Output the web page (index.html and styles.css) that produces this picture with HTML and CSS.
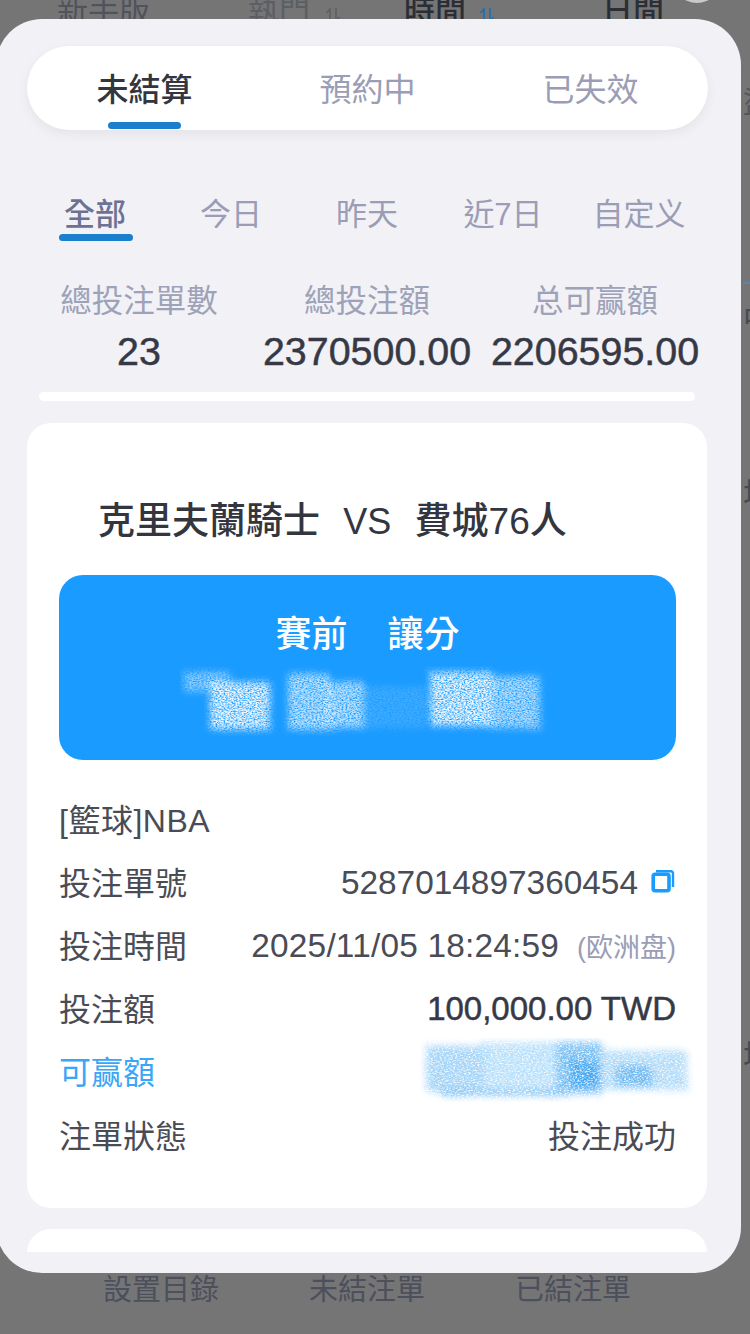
FILE: index.html
```html
<!DOCTYPE html>
<html lang="zh-Hant">
<head>
  <meta charset="UTF-8">
  <meta name="viewport" content="width=device-width, initial-scale=1.0">
  <title>未結算注單</title>
  <link rel="stylesheet" href="styles.css">
</head>
<body>
  <div class="page">
    <!-- page behind the sheet -->
    <div class="bg-top">
      <span class="bg-tab bg-new">新手版</span>
      <span class="bg-tab bg-hot">執門
        <svg class="sort-icon" width="16" height="16" viewBox="0 0 16 16" fill="none" stroke="currentColor" stroke-width="1.5">
          <path d="M5 15V2L1.5 6M11 1v13l3.500-4"/>
        </svg>
      </span>
      <span class="bg-tab bg-time">時間
        <svg class="sort-icon" width="16" height="16" viewBox="0 0 16 16" fill="none" stroke="currentColor" stroke-width="1.5">
          <path d="M5 15V2L1.5 6M11 1v13l3.500-4"/>
        </svg>
      </span>
      <span class="bg-tab bg-day">日間</span>
      <span class="bg-dot"></span>
    </div>
    <div class="bg-edge">
      <span class="edge-a">盜</span>
      <span class="edge-line"></span>
      <span class="edge-b">中</span>
      <span class="edge-c">坩</span>
      <span class="edge-d">坩</span>
    </div>
    <div class="bg-bottom">
      <span>設置目錄</span>
      <span>未結注單</span>
      <span>已結注單</span>
    </div>

    <!-- bet list sheet -->
    <div class="sheet">
      <div class="pill-tabs">
        <div class="pill-tab active">未結算</div>
        <div class="pill-tab">預約中</div>
        <div class="pill-tab">已失效</div>
      </div>

      <div class="filters">
        <div class="filter active">全部</div>
        <div class="filter">今日</div>
        <div class="filter">昨天</div>
        <div class="filter">近7日</div>
        <div class="filter">自定义</div>
      </div>

      <div class="stats">
        <div class="stat">
          <div class="stat-label">總投注單數</div>
          <div class="stat-value">23</div>
        </div>
        <div class="stat">
          <div class="stat-label">總投注額</div>
          <div class="stat-value">2370500.00</div>
        </div>
        <div class="stat">
          <div class="stat-label">总可赢額</div>
          <div class="stat-value">2206595.00</div>
        </div>
      </div>

      <div class="strip"></div>

      <div class="list">
        <div class="card">
          <div class="match">克里夫蘭騎士 <span class="vs">VS</span> 費城76人</div>

          <div class="market">
            <div class="market-title"><span>賽前</span><span>讓分</span></div>
            <svg class="smudge-white" width="380" height="70" viewBox="0 0 380 70">
              <defs>
                <filter id="grain-white" x="-10%" y="-20%" width="120%" height="140%">
                  <feTurbulence type="fractalNoise" baseFrequency="0.5 0.9" numOctaves="3" seed="4" result="n"/>
                  <feColorMatrix in="n" type="matrix" values="0 0 0 0 0  0 0 0 0 0  0 0 0 0 0  0 0 0 2.4 -0.5" result="mask"/>
                  <feDisplacementMap in="SourceGraphic" in2="n" scale="14" result="d"/>
                  <feGaussianBlur in="d" stdDeviation="3" result="b"/>
                  <feComposite in="b" in2="mask" operator="in" result="c"/>
                  <feGaussianBlur in="c" stdDeviation="0.5"/>
                </filter>
              </defs>
              <g filter="url(#grain-white)" fill="#fff">
                <rect x="4" y="6" width="46" height="20" opacity=".5"/>
                <rect x="30" y="16" width="60" height="48" opacity=".9"/>
                <rect x="108" y="8" width="42" height="56" opacity=".7"/>
                <rect x="146" y="16" width="38" height="46" opacity=".7"/>
                <rect x="184" y="20" width="62" height="42" opacity=".16"/>
                <rect x="250" y="6" width="62" height="54" opacity=".9"/>
                <rect x="308" y="10" width="52" height="52" opacity=".65"/>
              </g>
            </svg>
          </div>

          <div class="rows">
            <div class="row"><span class="sport">[籃球]NBA</span></div>
            <div class="row">
              <span>投注單號</span>
              <span class="row-value num">5287014897360454
                <svg class="copy-icon" width="24" height="24" viewBox="0 0 24 24" fill="none" stroke="#1a9bff">
                  <path d="M5 2.200h15a2 2 0 0 1 2 2V18" stroke-width="2.400"/>
                  <rect x="2.200" y="5.200" width="15.800" height="16.600" rx="2" stroke-width="3.600"/>
                </svg>
              </span>
            </div>
            <div class="row">
              <span>投注時間</span>
              <span class="row-value num date">2025/11/05 18:24:59<span class="odds-type">(欧洲盘)</span></span>
            </div>
            <div class="row">
              <span>投注額</span>
              <span class="row-value num strong">100,000.00 TWD</span>
            </div>
            <div class="row">
              <span class="win-label">可赢額</span>
              <svg class="smudge-blue" width="300" height="64" viewBox="0 0 300 64">
                <defs>
                  <filter id="grain-blue" x="-10%" y="-20%" width="120%" height="140%">
                    <feTurbulence type="fractalNoise" baseFrequency="0.45 0.9" numOctaves="3" seed="9" result="n"/>
                    <feColorMatrix in="n" type="matrix" values="0 0 0 0 0  0 0 0 0 0  0 0 0 0 0  0 0 0 2.4 -0.4" result="mask"/>
                    <feDisplacementMap in="SourceGraphic" in2="n" scale="14" result="d"/>
                    <feGaussianBlur in="d" stdDeviation="3" result="b"/>
                    <feComposite in="b" in2="mask" operator="in" result="c"/>
                    <feGaussianBlur in="c" stdDeviation="0.5"/>
                  </filter>
                </defs>
                <g filter="url(#grain-blue)">
                  <rect x="6" y="8" width="60" height="46" fill="#8fcbf6" opacity=".8"/>
                  <rect x="62" y="4" width="78" height="48" fill="#a9d9fa" opacity=".8"/>
                  <rect x="136" y="4" width="46" height="52" fill="#7cc2f5"/>
                  <rect x="150" y="22" width="30" height="28" fill="#46a9f3"/>
                  <rect x="180" y="12" width="88" height="40" fill="#a6d6f8" opacity=".85"/>
                  <rect x="196" y="28" width="36" height="20" fill="#6fbaf2"/>
                  <rect x="268" y="8" width="30" height="36" fill="#fff" opacity=".9"/>
                  <rect x="20" y="52" width="130" height="6" fill="#77bdf2"/>
                </g>
              </svg>
            </div>
            <div class="row">
              <span>注單狀態</span>
              <span class="row-value">投注成功</span>
            </div>
          </div>
        </div>

        <div class="card card-next"></div>
      </div>
    </div>
  </div>
</body>
</html>
```

FILE: styles.css
```css
* {
  box-sizing: border-box;
}
body {
  margin: 0;
  font-family: "Liberation Sans", "Noto Sans CJK TC", sans-serif;
}
.page {
  position: relative;
  width: 750px;
  height: 1334px;
  overflow: hidden;
  background-color: #757575;
  display: flex;
  flex-direction: column;
  justify-content: space-between;
}

/* behind the sheet */
.bg-top {
  display: flex;
  height: 19px;
  margin-top: -8px;
  padding-left: 57px;
  color: #50525c;
  font-size: 31px;
  line-height: 38px;
  white-space: nowrap;
}
.bg-tab {
  display: flex;
}
.sort-icon {
  margin: 15px 0 0 15px;
}
.bg-hot {
  margin-left: 98px;
  color: #5c5e66;
}
.bg-time {
  margin-left: 63px;
  color: #2c2e36;
  font-weight: 500;
}
.bg-time .sort-icon {
  color: #1a6fb0;
  margin-left: 13px;
}
.bg-day {
  margin-left: 107px;
  color: #2c2e36;
  font-weight: 500;
}
.bg-dot {
  position: absolute;
  top: -47px;
  left: 672px;
  width: 50px;
  height: 50px;
  border-radius: 50%;
  background-color: #c9c9c9;
}
.bg-bottom {
  display: flex;
  height: 61px;
  padding-left: 103px;
  gap: 90px;
  color: #4c4f5c;
  font-size: 29px;
  line-height: 34px;
}
.bg-edge {
  position: absolute;
  top: 0;
  left: 743px;
  width: 7px;
  height: 100%;
  overflow: hidden;
  color: #484a52;
  font-size: 30px;
  line-height: 36px;
}
.bg-edge span {
  display: block;
  white-space: nowrap;
}
.edge-a {
  margin-top: 85px;
  opacity: .7;
}
.edge-line {
  height: 2px;
  margin-top: 161px;
  background-color: #5f85a6;
}
.edge-b {
  margin-top: 17px;
}
.edge-c {
  margin-top: 139px;
}
.edge-d {
  margin-top: 526px;
}

/* sheet */
.sheet {
  position: absolute;
  top: 19px;
  left: -4px;
  width: 745px;
  height: 1254px;
  padding: 27px 34px 21px 31px;
  border-radius: 46px;
  background-color: #f1f1f6;
  display: flex;
  flex-direction: column;
}
.pill-tabs {
  display: grid;
  grid-template-columns: repeat(3, 1fr);
  flex: none;
  height: 84px;
  margin-right: -1px;
  padding: 0 6px;
  border-radius: 42px;
  background-color: #fff;
  box-shadow: 0 4px 12px rgba(0, 0, 0, .06);
}
.pill-tab {
  position: relative;
  text-align: center;
  color: #9a9db5;
  font-size: 32px;
  line-height: 88px;
}
.pill-tab.active {
  color: #33363f;
  font-weight: 500;
}
.pill-tab.active::after {
  content: '';
  position: absolute;
  left: 75px;
  bottom: 5px;
  width: 73px;
  height: 7px;
  border-radius: 4px;
  background-color: #1a7fcc;
}
.filters {
  display: grid;
  grid-template-columns: repeat(5, 136px);
  flex: none;
  height: 50px;
  margin-top: 61px;
}
.filter {
  position: relative;
  text-align: center;
  color: #9a9db5;
  font-size: 31px;
  line-height: 48px;
}
.filter.active {
  color: #6d7194;
  font-weight: 500;
}
.filter.active::after {
  content: '';
  position: absolute;
  left: 32px;
  bottom: 0;
  width: 74px;
  height: 7px;
  border-radius: 4px;
  background-color: #1a7fcc;
}
.stats {
  display: grid;
  grid-template-columns: repeat(3, 228px);
  flex: none;
  margin: 37px 0 0 -2px;
}
.stat {
  text-align: center;
  white-space: nowrap;
}
.stat-label {
  color: #9ea2b8;
  font-size: 31.5px;
  line-height: 46px;
}
.stat-value {
  margin-top: 4px;
  color: #363945;
  font-size: 39.4px;
  line-height: 46px;
  -webkit-text-stroke: .5px #363945;
}
.strip {
  flex: none;
  height: 9px;
  margin: 18px 12px 0;
  border-radius: 5px;
  background-color: #fff;
}
.list {
  flex: 1;
  min-height: 0;
  margin-top: 22px;
  overflow: hidden;
}
.card {
  padding: 75px 31px 43px 32px;
  border-radius: 24px;
  background-color: #fff;
}
.card-next {
  height: 60px;
  margin-top: 21px;
}
.match {
  margin-left: 39px;
  color: #33363f;
  font-size: 37px;
  font-weight: 500;
  line-height: 48px;
}
.vs {
  margin: 0 13px;
  font-size: 36px;
  font-weight: 400;
}
.market {
  display: flex;
  flex-direction: column;
  align-items: center;
  height: 185px;
  margin-top: 29px;
  border-radius: 24px;
  background-color: #1a9bff;
}
.market-title {
  display: flex;
  gap: 40px;
  margin-top: 37px;
  color: #fff;
  font-size: 36px;
  font-weight: 500;
  line-height: 46px;
}
.smudge-white {
  margin-top: 8px;
  margin-left: 5px;
}
.rows {
  margin-top: 26px;
}
.row {
  display: flex;
  justify-content: space-between;
  align-items: center;
  height: 63.2px;
  color: #4a4c55;
  font-size: 32px;
  white-space: nowrap;
}
.sport {
  letter-spacing: .5px;
}
.row-value {
  display: flex;
  align-items: center;
}
.num {
  padding-top: 4px;
  font-size: 33.4px;
}
.date {
  letter-spacing: .2px;
}
.strong {
  color: #363945;
  font-size: 33px;
  -webkit-text-stroke: .5px #363945;
}
.copy-icon {
  margin: -4px 1px 0 13px;
}
.odds-type {
  margin-left: 18px;
  color: #9a9db5;
  font-size: 27px;
  letter-spacing: 0;
}
.win-label {
  color: #3aa6f5;
}
.smudge-blue {
  margin-right: -44px;
}
```
